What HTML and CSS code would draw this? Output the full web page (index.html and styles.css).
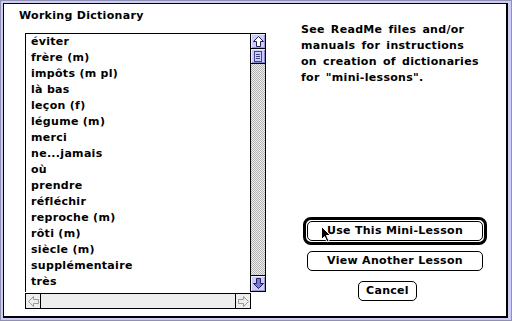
FILE: index.html
```html
<!DOCTYPE html>
<html>
<head>
<meta charset="utf-8">
<title>Working Dictionary</title>
<link rel="stylesheet" href="styles.css">
</head>
<body>
<div class="frame">
  <div class="dialog">
    <section class="left">
      <h1 class="title">Working Dictionary</h1>
      <div class="listbox">
        <ul class="items">
          <li>éviter</li>
          <li>frère (m)</li>
          <li>impôts (m pl)</li>
          <li>là bas</li>
          <li>leçon (f)</li>
          <li>légume (m)</li>
          <li>merci</li>
          <li>ne...jamais</li>
          <li>où</li>
          <li>prendre</li>
          <li>réfléchir</li>
          <li>reproche (m)</li>
          <li>rôti (m)</li>
          <li>siècle (m)</li>
          <li>supplémentaire</li>
          <li>très</li>
          <li>à l'étranger (f)</li>
        </ul>
        <div class="vscroll">
          <div class="varrow up">
            <svg width="11" height="11" viewBox="0 0 11 11"><path d="M5.5 0.5 L10.5 5.5 L7.5 5.5 L7.5 10.5 L3.5 10.5 L3.5 5.5 L0.5 5.5 Z" fill="#fff" stroke="#222255" stroke-width="1"/></svg>
          </div>
          <div class="thumb">
            <svg width="8" height="11" viewBox="0 0 8 11"><rect x="0.5" y="0.5" width="7" height="10" fill="#ccccff" stroke="#444488"/><path d="M2 3.5H6M2 5.5H6M2 7.5H6" stroke="#444488"/></svg>
          </div>
          <div class="track"></div>
          <div class="varrow down">
            <svg width="11" height="11" viewBox="0 0 11 11"><path d="M5.5 10.5 L10.5 5.5 L7.5 5.5 L7.5 0.5 L3.5 0.5 L3.5 5.5 L0.5 5.5 Z" fill="#7777dd" stroke="#222255" stroke-width="1"/></svg>
          </div>
        </div>
        <div class="hscroll">
          <div class="harrow hleft">
            <svg width="11" height="11" viewBox="0 0 11 11"><path d="M0.5 5.5 L5.5 0.5 L5.5 3.5 L10.5 3.5 L10.5 7.5 L5.5 7.5 L5.5 10.5 Z" fill="none" stroke="#999" stroke-width="1"/></svg>
          </div>
          <div class="htrack"></div>
          <div class="harrow hright">
            <svg width="11" height="11" viewBox="0 0 11 11"><path d="M10.5 5.5 L5.5 0.5 L5.5 3.5 L0.5 3.5 L0.5 7.5 L5.5 7.5 L5.5 10.5 Z" fill="none" stroke="#999" stroke-width="1"/></svg>
          </div>
        </div>
      </div>
    </section>
    <section class="right">
      <p class="note">See ReadMe files and/or<br>manuals for instructions<br>on creation of dictionaries<br>for "mini-lessons".</p>
      <div class="buttons">
        <div class="ring"><button class="btn wide">Use This Mini-Lesson</button></div>
        <button class="btn wide second">View Another Lesson</button>
        <button class="btn cancel">Cancel</button>
      </div>
    </section>
    <svg class="cursor" width="11" height="17" viewBox="0 0 11 17"><path d="M0.5 0.5 L0.5 13.5 L3.5 10.5 L6 16 L8 15 L5.5 9.5 L9.5 9.5 Z" fill="#000" stroke="#fff" stroke-width="1"/></svg>
  </div>
</div>
</body>
</html>
```

FILE: styles.css
```css
html, body {
  margin: 0;
  padding: 0;
}
body {
  width: 512px;
  height: 321px;
  overflow: hidden;
  font-family: "DejaVu Sans", "Liberation Sans", sans-serif;
  font-weight: bold;
  font-size: 11px;
  letter-spacing: 0.3px;
  color: #000;
}
.frame {
  box-sizing: border-box;
  width: 512px;
  height: 321px;
  background: #ccccf4;
  border: 1px solid #9090b0;
  padding: 2px 3px 2px 2px;
}
.dialog {
  box-sizing: border-box;
  height: 100%;
  background: #fff;
  border-left: 1px solid #000;
  border-top: 1px solid #000;
  border-right: 2px solid #000;
  border-bottom: 2px solid #000;
  display: flex;
  position: relative;
}
.left {
  padding: 4px 0 0 15px;
}
.title {
  margin: 0;
  font-size: 11px;
  font-weight: bold;
  line-height: 16px;
}
.listbox {
  margin: 9px 0 0 6px;
  display: grid;
  grid-template-columns: 225px 16px;
  grid-template-rows: 259px 16px;
}
.items {
  margin: 0;
  padding: 0 0 0 5px;
  list-style: none;
  border-top: 1px solid #000;
  border-left: 1px solid #000;
  overflow: hidden;
  line-height: 16px;
  white-space: nowrap;
}
.vscroll {
  box-sizing: border-box;
  border: 1px solid #000;
  height: 259px;
  display: flex;
  flex-direction: column;
}
.varrow {
  box-sizing: border-box;
  background: #ccccff;
  box-shadow: inset 1px 1px #eeeeff, inset -1px -1px #9999cc;
  display: flex;
  align-items: center;
  justify-content: center;
}
.varrow.up {
  height: 15px;
  border-bottom: 1px solid #000;
}
.varrow.down {
  height: 16px;
  border-top: 1px solid #000;
}
.thumb {
  box-sizing: border-box;
  height: 15px;
  border-bottom: 1px solid #000;
  background: #ccccff;
  box-shadow: inset 1px 1px #eeeeff, inset -1px -1px #8888cc;
  display: flex;
  align-items: center;
  justify-content: center;
}
.track {
  flex: 1;
  background: repeating-conic-gradient(#b4b4b4 0 25%, #eeeeee 0 50%) 0 0 / 2px 2px;
}
.hscroll {
  grid-column: 1;
  grid-row: 2;
  box-sizing: border-box;
  width: 226px;
  height: 16px;
  margin-top: 1px;
  border: 1px solid #000;
  background: #eeeeee;
  display: flex;
}
.harrow {
  box-sizing: border-box;
  width: 15px;
  display: flex;
  align-items: center;
  justify-content: center;
}
.hleft {
  border-right: 1px solid #000;
}
.hright {
  border-left: 1px solid #000;
}
.htrack {
  flex: 1;
}
.right {
  width: 187px;
  margin-left: 35px;
  padding: 18px 0 15px 0;
  display: flex;
  flex-direction: column;
}
.note {
  margin: 0;
  line-height: 16px;
  white-space: nowrap;
  word-spacing: 2px;
}
.buttons {
  margin-top: auto;
  display: flex;
  flex-direction: column;
  align-items: flex-start;
}
.ring {
  margin-left: 2px;
  border: 3px solid #000;
  border-radius: 8px;
  padding: 1px;
  display: flex;
}
.btn {
  box-sizing: border-box;
  height: 20px;
  padding: 0;
  border: 1px solid #000;
  border-radius: 5px;
  background: #fff;
  color: #000;
  font-family: inherit;
  font-weight: bold;
  font-size: 11px;
  letter-spacing: 0.3px;
  line-height: 18px;
  text-align: center;
}
.wide {
  width: 176px;
}
.second {
  margin: 6px 0 0 6px;
}
.cancel {
  width: 59px;
  margin: 10px 0 0 57px;
}
.cursor {
  position: absolute;
  left: 317px;
  top: 222px;
}
```
